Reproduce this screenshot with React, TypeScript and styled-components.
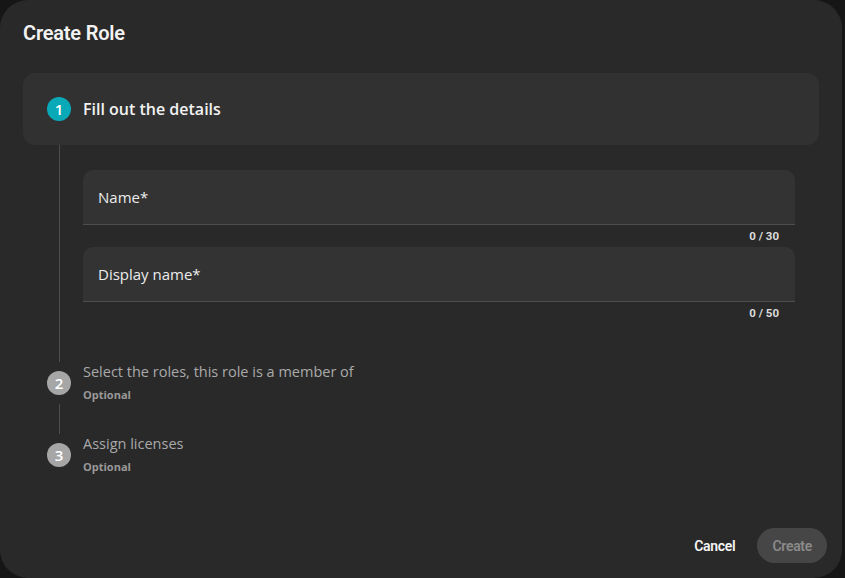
import React from 'react';
import styled, { createGlobalStyle } from 'styled-components';

const GlobalStyle = createGlobalStyle`
  html, body {
    margin: 0;
    padding: 0;
    background: #161616;
  }
  * {
    box-sizing: border-box;
  }
`;

const Page = styled.div`
  width: 845px;
  height: 578px;
  display: flex;
  align-items: flex-start;
  background: #161616;
  overflow: hidden;
`;

const Dialog = styled.div`
  width: 842px;
  height: 578px;
  background: #292929;
  border-radius: 28px;
  display: flex;
  flex-direction: column;
  padding: 20px 15px 15px 23px;
  font-family: Roboto, "Liberation Sans", sans-serif;
  color: #f0f0f0;
`;

const Title = styled.h2`
  margin: 0;
  font-size: 20px;
  line-height: 26px;
  font-weight: 600;
  letter-spacing: -0.2px;
  color: #f2f2f2;
`;

const Stepper = styled.div`
  margin-top: 27px;
  width: 796px;
  display: flex;
  flex-direction: column;
`;

const ActiveHeader = styled.div`
  height: 72px;
  background: #313131;
  border-radius: 12px;
  display: flex;
  align-items: center;
  gap: 12px;
  padding-left: 24px;
`;

const StepRow = styled.div`
  height: 42px;
  display: flex;
  align-items: center;
  gap: 12px;
  padding-left: 24px;
`;

const Circle = styled.div<{ $active?: boolean }>`
  width: 24px;
  height: 24px;
  flex: none;
  border-radius: 50%;
  background: ${({ $active }) => ($active ? '#0aa9b7' : '#a6a6a6')};
  color: #fff;
  font-family: "Open Sans", "Noto Sans", sans-serif;
  font-size: 15px;
  font-weight: 600;
  display: flex;
  align-items: center;
  justify-content: center;
`;

const StepTitle = styled.div<{ $active?: boolean }>`
  font-family: "Open Sans", "Noto Sans", sans-serif;
  font-size: ${({ $active }) => ($active ? '16px' : '14.5px')};
  font-weight: ${({ $active }) => ($active ? 600 : 500)};
  color: ${({ $active }) => ($active ? '#f2f2f2' : '#a9a9a9')};
  line-height: 18px;
  white-space: nowrap;
`;

const StepText = styled.div`
  display: flex;
  flex-direction: column;
  gap: 7px;
  margin-top: -1px;
`;

const Optional = styled.div`
  font-family: "Open Sans", "Noto Sans", sans-serif;
  font-size: 11px;
  font-weight: 700;
  color: #999;
  line-height: 14px;
`;

const StepBody = styled.div`
  display: flex;
`;

const Connector = styled.div<{ $height?: number }>`
  width: 1px;
  margin-left: 36px;
  background: #4d4d4d;
  flex: none;
  ${({ $height }) => ($height ? `height: ${$height}px;` : 'align-self: stretch;')}
`;

const Fields = styled.div`
  width: 712px;
  margin-left: 23px;
  padding: 25px 0 38px;
  display: flex;
  flex-direction: column;
`;

const Field = styled.div`
  height: 55px;
  background: #333333;
  border-radius: 10px 10px 0 0;
  border-bottom: 1px solid #4e4e4e;
  display: flex;
  align-items: center;
  padding: 0 15px 0 15px;
  font-family: "Open Sans", "Noto Sans", sans-serif;
  font-size: 15px;
  font-weight: 500;
  color: #ececec;
`;

const Counter = styled.div`
  height: 22px;
  display: flex;
  align-items: center;
  justify-content: flex-end;
  padding-right: 16px;
  font-size: 11.5px;
  font-weight: 700;
  color: #dcdcdc;
`;

const Footer = styled.div`
  margin-top: auto;
  display: flex;
  justify-content: flex-end;
  align-items: center;
  gap: 10px;
`;

const Button = styled.button<{ $primary?: boolean }>`
  height: 35px;
  border: none;
  border-radius: 18px;
  padding: 0 ${({ $primary }) => ($primary ? '15px' : '12px')};
  font-family: Roboto, "Liberation Sans", sans-serif;
  font-size: 14px;
  font-weight: 600;
  letter-spacing: -0.3px;
  background: ${({ $primary }) => ($primary ? '#464646' : 'transparent')};
  color: ${({ $primary }) => ($primary ? '#8a8a8a' : '#f5f5f5')};
  cursor: pointer;
`;

const App: React.FC = () => {
  return (
    <>
      <GlobalStyle />
      <Page>
        <Dialog>
          <Title>Create Role</Title>
          <Stepper>
            <ActiveHeader>
              <Circle $active>1</Circle>
              <StepTitle $active>Fill out the details</StepTitle>
            </ActiveHeader>
            <StepBody>
              <Connector />
              <Fields>
                <Field>Name*</Field>
                <Counter>0 / 30</Counter>
                <Field>Display name*</Field>
                <Counter>0 / 50</Counter>
              </Fields>
            </StepBody>
            <StepRow>
              <Circle>2</Circle>
              <StepText>
                <StepTitle>Select the roles, this role is a member of</StepTitle>
                <Optional>Optional</Optional>
              </StepText>
            </StepRow>
            <StepBody>
              <Connector $height={30} />
            </StepBody>
            <StepRow>
              <Circle>3</Circle>
              <StepText>
                <StepTitle>Assign licenses</StepTitle>
                <Optional>Optional</Optional>
              </StepText>
            </StepRow>
          </Stepper>
          <Footer>
            <Button>Cancel</Button>
            <Button $primary disabled>Create</Button>
          </Footer>
        </Dialog>
      </Page>
    </>
  );
};

export default App;
